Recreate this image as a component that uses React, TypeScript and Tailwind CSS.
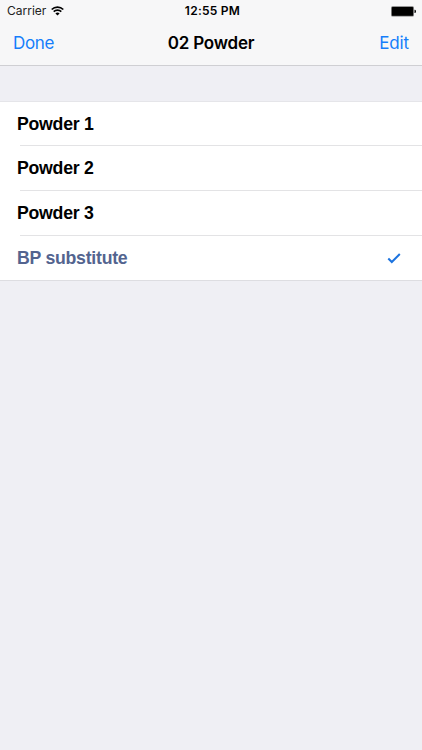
const rows = ["Powder 1", "Powder 2", "Powder 3"];

export default function App() {
  return (
    <div className="flex h-[750px] w-[422px] flex-col overflow-hidden bg-[#efeff4] font-['Inter',sans-serif] text-black">
      <header className="h-[66px] border-b border-[#cfcfd3] bg-[#f7f7f8]">
        <div className="grid h-[22px] grid-cols-3 items-center pr-[6px] pl-[7px] text-[12px]">
          <div className="flex items-center gap-[5px]">
            <span className="text-[#222]">Carrier</span>
            <svg width="13" height="10" viewBox="0 0 13 10" fill="none" stroke="black" strokeWidth="1.7">
              <path d="M.7 3.5a8.2 8.2 0 0 1 11.6 0M2.7 5.6a5.4 5.4 0 0 1 7.6 0" />
              <path d="M6.5 9.6 4.4 7.5a3 3 0 0 1 4.2 0Z" fill="black" stroke="none" />
            </svg>
          </div>
          <span className="pl-[2px] text-center font-semibold tracking-[0.25px]">12:55 PM</span>
          <svg className="justify-self-end" width="26" height="11" viewBox="0 0 26 11">
            <rect x="1" y=".3" width="23" height="10.2" rx="1.5" fill="#777" />
            <rect x="2" y="1" width="21" height="8.8" rx=".5" />
            <path d="M24.5 3.7H25q1 .3 1 1.7t-1 1.7h-.5Z" />
          </svg>
        </div>
        <nav className="grid h-[43px] grid-cols-3 items-center px-[13px] text-[17px] text-[#157efb]">
          <span className="tracking-[-0.3px]">Done</span>
          <span className="text-center font-semibold tracking-[-0.2px] whitespace-nowrap text-black">02 Powder</span>
          <span className="text-right tracking-[-0.15px]">Edit</span>
        </nav>
      </header>
      <main className="mt-[35px] border-y border-t-[#e5e5e9] border-b-[#dddde1] bg-white font-['Liberation_Sans',Arial,sans-serif] text-[17.7px] leading-[24px] font-bold tracking-[-0.25px]">
        {rows.map((row) => (
          <div key={row} className="h-[45px] pl-[17px] first:h-[44px]">
            <div className="flex h-[calc(100%-1px)] items-center">{row}</div>
            <div className="ml-[3px] h-px bg-[#e3e3e5]" />
          </div>
        ))}
        <div className="flex h-[44px] items-center justify-between pr-[21px] pl-[17px] text-[#53648f]">
          <span>BP substitute</span>
          <svg width="14" height="11" viewBox="0 0 14 11" fill="none" stroke="#1c73df" strokeWidth="2">
            <path d="m1.3 5.5 3.5 3.5L12.8 1" />
          </svg>
        </div>
      </main>
    </div>
  );
}
